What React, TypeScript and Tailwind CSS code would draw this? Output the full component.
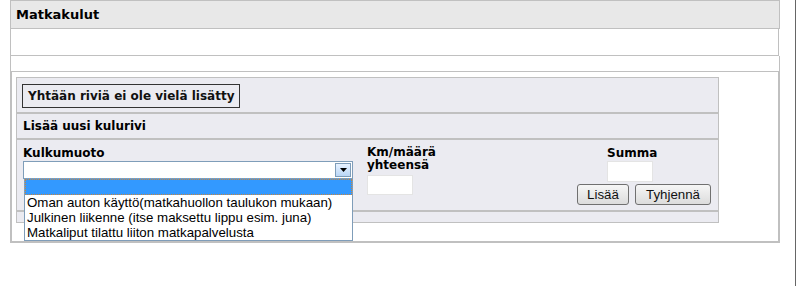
import React from 'react'

const bold = { fontFamily: 'Verdana, "DejaVu Sans", sans-serif' }
const arial = { fontFamily: '"Liberation Sans", Arial, sans-serif' }

const options = [
  'Oman auton käyttö(matkahuollon taulukon mukaan)',
  'Julkinen liikenne (itse maksettu lippu esim. juna)',
  'Matkaliput tilattu liiton matkapalvelusta',
]

function XpButton({ label, width }: { label: string; width: string }) {
  return (
    <button
      className={`${width} h-[21px] rounded-[3px] border border-[#707070] bg-gradient-to-b from-[#f6f6f6] to-[#dcdcdc] text-[13.3px] leading-none text-[#111] flex items-center justify-center`}
      style={arial}
    >
      {label}
    </button>
  )
}

export default function App() {
  return (
    <div className="w-[796px] h-[286px] bg-white border-r border-[#666]">
      <div className="pl-[10px] w-[780px]">
        {/* title */}
        <div className="h-[29px] bg-[#e8e8e8] border border-[#c0c0c0] flex items-center pl-[5px]">
          <span className="text-[13px] font-bold text-black" style={bold}>Matkakulut</span>
        </div>
        <div className="h-[27px] border-x border-b border-[#c0c0c0] mr-[1px]"></div>
        <div className="h-[16px] border-x border-b border-[#c0c0c0]"></div>

        {/* main */}
        <div className="border-x-2 border-b-2 border-[#c0c0c0] pt-[5px] pl-[4px] h-[171px]">
          <div className="w-[703px] bg-[#ebebf1] border border-[#c0c0c0]" style={bold}>
            <div className="h-[36px] pl-[5px] pt-[5px] border-b-2 border-[#c0c0c0]">
              <div className="inline-flex h-[24px] items-center px-[5px] border border-[#333] text-[12px] font-bold text-[#111]">
                Yhtään riviä ei ole vielä lisätty
              </div>
            </div>
            <div className="h-[26px] pl-[6px] flex items-center border-b-2 border-[#c0c0c0] text-[12px] font-bold text-black">
              Lisää uusi kulurivi
            </div>
            <div className="h-[72px] pl-[6px] pt-[6px] flex border-b-2 border-[#c0c0c0]">
              <div className="w-[344px] relative">
                <div className="text-[12px] font-bold leading-[15px] h-[15px] text-black">Kulkumuoto</div>
                <div className="w-[330px] h-[18px] bg-white border border-[#7f9db9] flex justify-end p-[1px]">
                  <div className="w-[16px] h-[14px] border border-[#7f9db9] bg-gradient-to-b from-[#e8f2ff] to-[#b9d6f7] flex items-center justify-center">
                    <svg width="7" height="4" viewBox="0 0 7 4">
                      <path d="M0 0h7L3.5 4z" fill="#000" />
                    </svg>
                  </div>
                </div>
                {/* open option list */}
                <div className="absolute left-[1px] top-[32px] w-[329px] bg-white border border-[#7f9db9] z-10" style={arial}>
                  <div className="h-[16px] bg-[#3399ff] border border-dotted border-[#c9853b]"></div>
                  {options.map((o) => (
                    <div key={o} className="h-[15px] pl-[2px] text-[13.3px] leading-[15px] text-black whitespace-nowrap">
                      {o}
                    </div>
                  ))}
                </div>
              </div>
              <div className="w-[210px]">
                <div className="text-[12px] font-bold leading-[13px] text-black">Km/määrä<br />yhteensä</div>
                <div className="mt-[3px] w-[46px] h-[20px] bg-white border border-[#e4e4e4]"></div>
              </div>
              <div className="w-[134px] flex flex-col items-end">
                <div className="w-[104px] text-[12px] font-bold leading-[15px] h-[15px] text-black">Summa</div>
                <div className="w-[104px]">
                  <div className="w-[46px] h-[21px] bg-white border border-[#e4e4e4]"></div>
                </div>
                <div className="flex gap-[6px] mt-[2px]">
                  <XpButton label="Lisää" width="w-[52px]" />
                  <XpButton label="Tyhjennä" width="w-[76px]" />
                </div>
              </div>
            </div>
            <div className="h-[10px]"></div>
          </div>
        </div>
      </div>
    </div>
  )
}
